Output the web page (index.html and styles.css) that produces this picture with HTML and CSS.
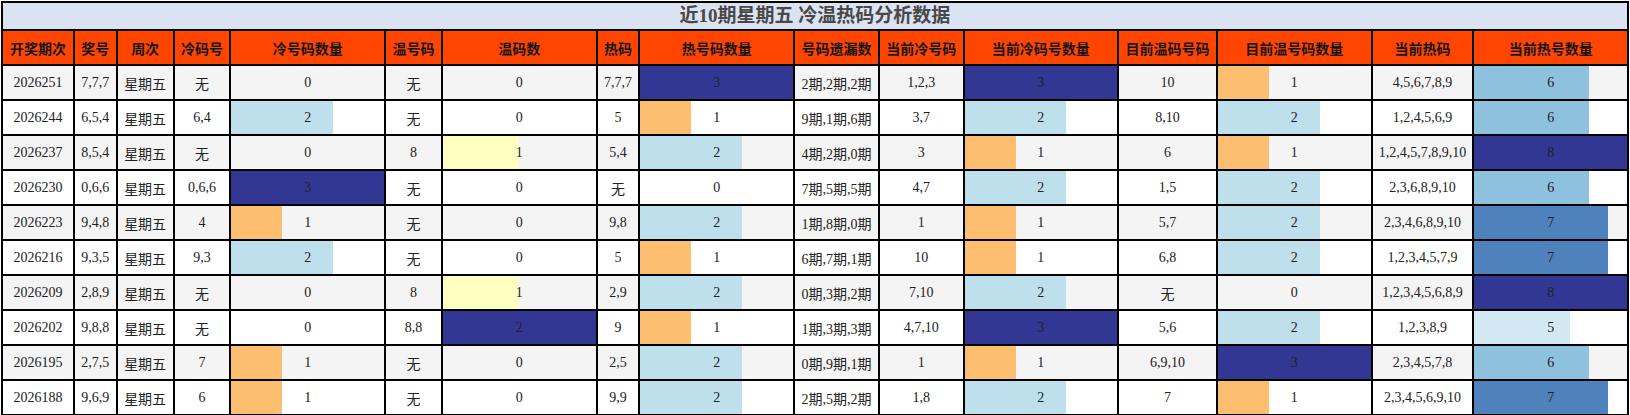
FILE: index.html
```html
<!DOCTYPE html>
<html lang="zh">
<head>
<meta charset="utf-8">
<title>近10期星期五 冷温热码分析数据</title>
<link rel="stylesheet" href="styles.css">
</head>
<body>
<table class="grid">
  <colgroup>
    <col class="w72"><col class="w43"><col class="w57"><col class="w57"><col class="w155">
    <col class="w57"><col class="w155"><col class="w43"><col class="w155"><col class="w85">
    <col class="w85"><col class="w155"><col class="w99"><col class="w155"><col class="w102"><col class="w155">
  </colgroup>
  <thead>
    <tr><th class="title" colspan="16">近10期星期五 冷温热码分析数据</th></tr>
    <tr class="head">
      <th>开奖期次</th><th>奖号</th><th>周次</th><th>冷码号</th><th>冷号码数量</th><th>温号码</th><th>温码数</th><th>热码</th><th>热号码数量</th><th>号码遗漏数</th><th>当前冷号码</th><th>当前冷码号数量</th><th>目前温码号码</th><th>目前温号码数量</th><th>当前热码</th><th>当前热号数量</th>
    </tr>
  </thead>
  <tbody>
    <tr>
      <td>2026251</td><td>7,7,7</td><td>星期五</td><td>无</td><td class="bar">0</td><td>无</td><td class="bar">0</td><td>7,7,7</td><td class="bar dark" style="--p:100%">3</td><td>2期,2期,2期</td><td>1,2,3</td><td class="bar dark" style="--p:100%">3</td><td>10</td><td class="bar org" style="--p:33.3%">1</td><td>4,5,6,7,8,9</td><td class="bar mid" style="--p:75%">6</td>
    </tr>
    <tr>
      <td>2026244</td><td>6,5,4</td><td>星期五</td><td>6,4</td><td class="bar lt" style="--p:66.7%">2</td><td>无</td><td class="bar">0</td><td>5</td><td class="bar org" style="--p:33.3%">1</td><td>9期,1期,6期</td><td>3,7</td><td class="bar lt" style="--p:66.7%">2</td><td>8,10</td><td class="bar lt" style="--p:66.7%">2</td><td>1,2,4,5,6,9</td><td class="bar mid" style="--p:75%">6</td>
    </tr>
    <tr>
      <td>2026237</td><td>8,5,4</td><td>星期五</td><td>无</td><td class="bar">0</td><td>8</td><td class="bar yel" style="--p:50%">1</td><td>5,4</td><td class="bar lt" style="--p:66.7%">2</td><td>4期,2期,0期</td><td>3</td><td class="bar org" style="--p:33.3%">1</td><td>6</td><td class="bar org" style="--p:33.3%">1</td><td>1,2,4,5,7,8,9,10</td><td class="bar dark" style="--p:100%">8</td>
    </tr>
    <tr>
      <td>2026230</td><td>0,6,6</td><td>星期五</td><td>0,6,6</td><td class="bar dark" style="--p:100%">3</td><td>无</td><td class="bar">0</td><td>无</td><td class="bar">0</td><td>7期,5期,5期</td><td>4,7</td><td class="bar lt" style="--p:66.7%">2</td><td>1,5</td><td class="bar lt" style="--p:66.7%">2</td><td>2,3,6,8,9,10</td><td class="bar mid" style="--p:75%">6</td>
    </tr>
    <tr>
      <td>2026223</td><td>9,4,8</td><td>星期五</td><td>4</td><td class="bar org" style="--p:33.3%">1</td><td>无</td><td class="bar">0</td><td>9,8</td><td class="bar lt" style="--p:66.7%">2</td><td>1期,8期,0期</td><td>1</td><td class="bar org" style="--p:33.3%">1</td><td>5,7</td><td class="bar lt" style="--p:66.7%">2</td><td>2,3,4,6,8,9,10</td><td class="bar steel" style="--p:87.5%">7</td>
    </tr>
    <tr>
      <td>2026216</td><td>9,3,5</td><td>星期五</td><td>9,3</td><td class="bar lt" style="--p:66.7%">2</td><td>无</td><td class="bar">0</td><td>5</td><td class="bar org" style="--p:33.3%">1</td><td>6期,7期,1期</td><td>10</td><td class="bar org" style="--p:33.3%">1</td><td>6,8</td><td class="bar lt" style="--p:66.7%">2</td><td>1,2,3,4,5,7,9</td><td class="bar steel" style="--p:87.5%">7</td>
    </tr>
    <tr>
      <td>2026209</td><td>2,8,9</td><td>星期五</td><td>无</td><td class="bar">0</td><td>8</td><td class="bar yel" style="--p:50%">1</td><td>2,9</td><td class="bar lt" style="--p:66.7%">2</td><td>0期,3期,2期</td><td>7,10</td><td class="bar lt" style="--p:66.7%">2</td><td>无</td><td class="bar">0</td><td>1,2,3,4,5,6,8,9</td><td class="bar dark" style="--p:100%">8</td>
    </tr>
    <tr>
      <td>2026202</td><td>9,8,8</td><td>星期五</td><td>无</td><td class="bar">0</td><td>8,8</td><td class="bar dark" style="--p:100%">2</td><td>9</td><td class="bar org" style="--p:33.3%">1</td><td>1期,3期,3期</td><td>4,7,10</td><td class="bar dark" style="--p:100%">3</td><td>5,6</td><td class="bar lt" style="--p:66.7%">2</td><td>1,2,3,8,9</td><td class="bar pale" style="--p:62.5%">5</td>
    </tr>
    <tr>
      <td>2026195</td><td>2,7,5</td><td>星期五</td><td>7</td><td class="bar org" style="--p:33.3%">1</td><td>无</td><td class="bar">0</td><td>2,5</td><td class="bar lt" style="--p:66.7%">2</td><td>0期,9期,1期</td><td>1</td><td class="bar org" style="--p:33.3%">1</td><td>6,9,10</td><td class="bar dark" style="--p:100%">3</td><td>2,3,4,5,7,8</td><td class="bar mid" style="--p:75%">6</td>
    </tr>
    <tr>
      <td>2026188</td><td>9,6,9</td><td>星期五</td><td>6</td><td class="bar org" style="--p:33.3%">1</td><td>无</td><td class="bar">0</td><td>9,9</td><td class="bar lt" style="--p:66.7%">2</td><td>2期,5期,2期</td><td>1,8</td><td class="bar lt" style="--p:66.7%">2</td><td>7</td><td class="bar org" style="--p:33.3%">1</td><td>2,3,4,5,6,9,10</td><td class="bar steel" style="--p:87.5%">7</td>
    </tr>
  </tbody>
</table>
</body>
</html>
```

FILE: styles.css
```css
html, body {
  margin: 0;
  padding: 0;
  background: #ffffff;
}

.grid {
  width: 1628px;
  margin: 1px;
  table-layout: fixed;
  border-collapse: collapse;
  font-family: "Liberation Serif", "Noto Sans CJK SC", serif;
  font-size: 14px;
  color: #222222;
}

.w43 { width: 2.638%; }
.w57 { width: 3.497%; }
.w72 { width: 4.417%; }
.w85 { width: 5.215%; }
.w99 { width: 6.074%; }
.w102 { width: 6.258%; }
.w155 { width: 9.509%; }

.grid th,
.grid td {
  border: 2px solid #000000;
  padding: 0;
  text-align: center;
  vertical-align: middle;
  white-space: nowrap;
  overflow: hidden;
}

.grid .title {
  height: 26px;
  background: #dbe2f2;
  color: #484848;
  font-family: "Liberation Serif", "Noto Sans CJK SC", sans-serif;
  font-size: 19px;
  font-weight: bold;
  line-height: 26px;
}

.head th {
  height: 33px;
  background: #ff4500;
  color: #161616;
  font-family: "Noto Sans CJK SC", sans-serif;
  font-size: 14px;
  font-weight: bold;
}

.grid td {
  height: 33px;
}

.grid tbody tr:nth-child(odd) td {
  background-color: #f4f4f4;
}

.grid tbody tr:nth-child(even) td {
  background-color: #ffffff;
}

.grid tbody td.bar {
  --c: transparent;
  background-image: linear-gradient(to right, var(--c) 0, var(--c) var(--p, 0%), transparent var(--p, 0%));
}

.grid tbody td.dark { --c: #323794; }
.grid tbody td.lt { --c: #bde0ec; }
.grid tbody td.org { --c: #fdbf6f; }
.grid tbody td.yel { --c: #ffffc0; }
.grid tbody td.mid { --c: #8ec1de; }
.grid tbody td.steel { --c: #4f82bd; }
.grid tbody td.pale { --c: #d2e9f4; }
```
